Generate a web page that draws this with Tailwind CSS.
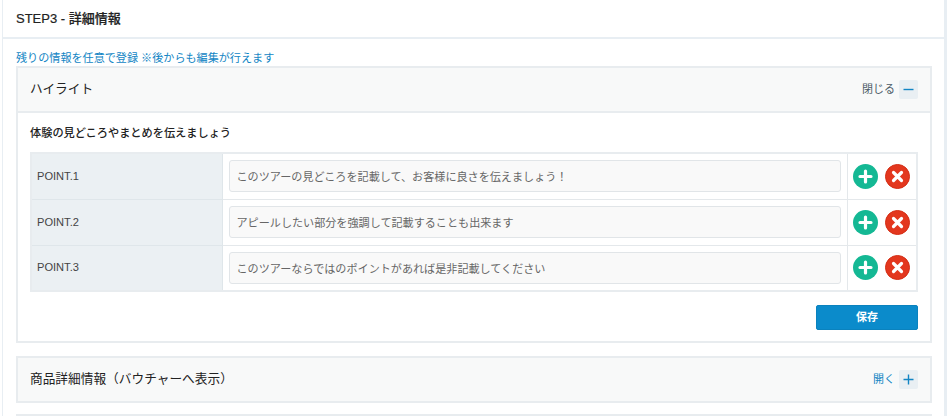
<!DOCTYPE html>
<html lang="ja">
<head>
  <meta charset="UTF-8">
  <title>STEP3 - 詳細情報</title>
  <script src="https://cdn.jsdelivr.net/npm/@tailwindcss/browser@4"></script>
</head>
<body class="bg-white h-[416px] overflow-hidden font-['Liberation_Sans','Noto_Sans_CJK_JP',sans-serif] text-[#333]">
  <div class="ml-[2px] mr-[1px] border-l border-r-[3px] border-[#e8eef3] h-[416px] overflow-hidden">
    <div class="h-[39px] border-b-2 border-[#e8eef3] pl-[13px] flex items-center">
      <h2 class="text-[13px] font-medium text-[#222] [-webkit-text-stroke:0.2px_#222]">STEP3 - 詳細情報</h2>
    </div>
    <div class="pl-[13px] pr-[12px]">
      <p class="mt-[11px] h-[16px] text-[11.1px] leading-[16px] text-[#1285c4]">残りの情報を任意で登録 ※後からも編集が行えます</p>

      <section class="border-2 border-[#e8ecef] h-[277px]">
        <div class="h-[45px] bg-[#f8f9f9] border-b-2 border-[#e8ecef] flex items-center justify-between px-[12px]">
          <h3 class="text-[12.7px] text-[#222]">ハイライト</h3>
          <div class="flex items-center gap-[4px]">
            <span class="text-[11px] text-[#4a5a66]">閉じる</span>
            <span class="w-[19px] h-[19px] rounded-[2px] bg-[#e9eff3] flex items-center justify-center">
              <svg width="11" height="11" viewBox="0 0 11 11"><path d="M0.5 5.5h10" stroke="#1285c4" stroke-width="1.4"/></svg>
            </span>
          </div>
        </div>
        <div class="px-[12px] pt-[12px]">
          <p class="text-[11.2px] leading-[17px] font-medium text-[#222]">体験の見どころやまとめを伝えましょう</p>
          <table class="mt-[10px] w-[888px] table-fixed border-collapse border-2 border-[#e8ecef] text-[11.1px]">
            <colgroup><col class="w-[191px]"><col><col class="w-[70px]"></colgroup>
            <tbody>
              <tr class="h-[46px]">
                <th class="border border-[#dfe6ea] bg-[#ebf0f3] pl-[5px] text-left font-normal text-[#444]">POINT.1</th>
                <td class="border border-[#e4e8eb] px-[6px]">
                  <input type="text" value="このツアーの見どころを記載して、お客様に良さを伝えましょう！" class="w-full h-[32px] px-[7px] rounded-[3px] border border-[#e1e5e8] bg-[#f9f9f9] text-[11.1px] text-[#666]">
                </td>
                <td class="border border-[#e4e8eb]">
                  <div class="flex items-center justify-center gap-[7px]">
                    <span class="w-[25px] h-[25px] rounded-full bg-[#14b894] flex items-center justify-center">
                      <svg width="15" height="15" viewBox="0 0 15 15"><path d="M7.5 2v11M2 7.5h11" stroke="#fff" stroke-width="3.2" stroke-linecap="round"/></svg>
                    </span>
                    <span class="w-[25px] h-[25px] rounded-full bg-[#e3371e] border border-[#d42d14] flex items-center justify-center">
                      <svg width="13" height="13" viewBox="0 0 13 13"><path d="M2.5 2.5l8 8M10.5 2.5l-8 8" stroke="#fff" stroke-width="3.2" stroke-linecap="round"/></svg>
                    </span>
                  </div>
                </td>
              </tr>
              <tr class="h-[46px]">
                <th class="border border-[#dfe6ea] bg-[#ebf0f3] pl-[5px] text-left font-normal text-[#444]">POINT.2</th>
                <td class="border border-[#e4e8eb] px-[6px]">
                  <input type="text" value="アピールしたい部分を強調して記載することも出来ます" class="w-full h-[32px] px-[7px] rounded-[3px] border border-[#e1e5e8] bg-[#f9f9f9] text-[11.1px] text-[#666]">
                </td>
                <td class="border border-[#e4e8eb]">
                  <div class="flex items-center justify-center gap-[7px]">
                    <span class="w-[25px] h-[25px] rounded-full bg-[#14b894] flex items-center justify-center">
                      <svg width="15" height="15" viewBox="0 0 15 15"><path d="M7.5 2v11M2 7.5h11" stroke="#fff" stroke-width="3.2" stroke-linecap="round"/></svg>
                    </span>
                    <span class="w-[25px] h-[25px] rounded-full bg-[#e3371e] border border-[#d42d14] flex items-center justify-center">
                      <svg width="13" height="13" viewBox="0 0 13 13"><path d="M2.5 2.5l8 8M10.5 2.5l-8 8" stroke="#fff" stroke-width="3.2" stroke-linecap="round"/></svg>
                    </span>
                  </div>
                </td>
              </tr>
              <tr class="h-[46px]">
                <th class="border border-[#dfe6ea] bg-[#ebf0f3] pl-[5px] text-left font-normal text-[#444]">POINT.3</th>
                <td class="border border-[#e4e8eb] px-[6px]">
                  <input type="text" value="このツアーならではのポイントがあれば是非記載してください" class="w-full h-[32px] px-[7px] rounded-[3px] border border-[#e1e5e8] bg-[#f9f9f9] text-[11.1px] text-[#666]">
                </td>
                <td class="border border-[#e4e8eb]">
                  <div class="flex items-center justify-center gap-[7px]">
                    <span class="w-[25px] h-[25px] rounded-full bg-[#14b894] flex items-center justify-center">
                      <svg width="15" height="15" viewBox="0 0 15 15"><path d="M7.5 2v11M2 7.5h11" stroke="#fff" stroke-width="3.2" stroke-linecap="round"/></svg>
                    </span>
                    <span class="w-[25px] h-[25px] rounded-full bg-[#e3371e] border border-[#d42d14] flex items-center justify-center">
                      <svg width="13" height="13" viewBox="0 0 13 13"><path d="M2.5 2.5l8 8M10.5 2.5l-8 8" stroke="#fff" stroke-width="3.2" stroke-linecap="round"/></svg>
                    </span>
                  </div>
                </td>
              </tr>
            </tbody>
          </table>
          <div class="mt-[13px] flex justify-end">
            <button class="w-[102px] h-[25px] rounded-[2px] bg-[#0b8bcb] border border-[#0a82be] text-white text-[11px] font-bold">保存</button>
          </div>
        </div>
      </section>

      <section class="mt-[13px] h-[47px] border-2 border-[#e8ecef] bg-[#f8f9f9] flex items-center justify-between px-[12px]">
        <h3 class="text-[12.7px] text-[#222]">商品詳細情報（バウチャーへ表示）</h3>
        <div class="flex items-center gap-[4px]">
          <span class="text-[11px] text-[#1285c4]">開く</span>
          <span class="w-[19px] h-[19px] rounded-[2px] bg-[#e9eff3] flex items-center justify-center">
            <svg width="11" height="11" viewBox="0 0 11 11"><path d="M0.5 5.5h10M5.5 0.5v10" stroke="#1285c4" stroke-width="1.4"/></svg>
          </span>
        </div>
      </section>

      <section class="mt-[11px] h-[40px] border-2 border-[#e8ecef] bg-[#f8f9f9]"></section>
    </div>
  </div>
</body>
</html>
